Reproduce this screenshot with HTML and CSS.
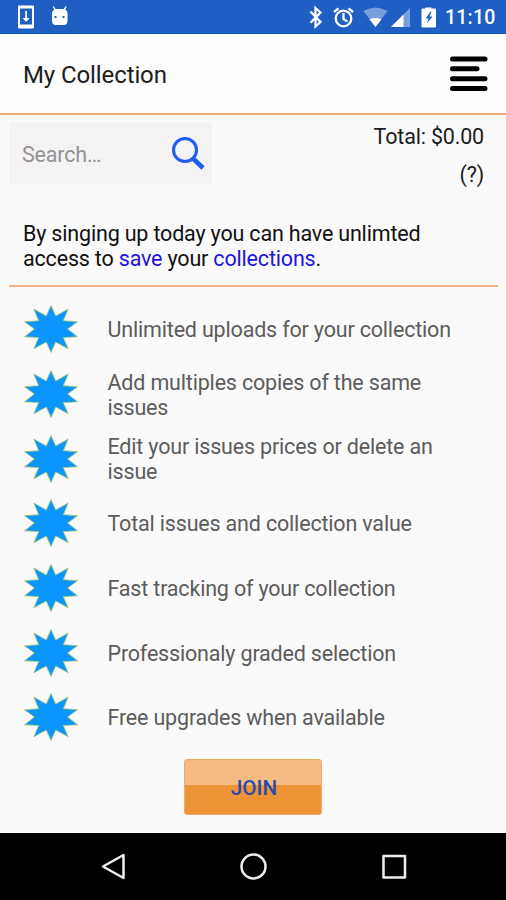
FILE: index.html
```
<!DOCTYPE html>
<html lang="en">
<head>
<meta charset="utf-8">
<title>My Collection</title>
<link rel="stylesheet" href="styles.css">
</head>
<body>
<svg width="0" height="0" class="defs"><defs>
<symbol id="star" viewBox="0 0 54 48"><path d="M27 .500L31.700 11L44.200 4L39.300 15.700L53.500 16.700L43.600 24L53.500 31.800L39.300 32.600L44.200 43.800L31.700 37L27 47.500L22.300 37L9.800 43.800L14.700 32.600L.5 31.800L10.400 24L.5 16.700L14.700 15.700L9.800 4L22.300 11Z"/></symbol>
</defs></svg>
<div class="status">
  <svg width="506" height="34" viewBox="0 0 506 34" fill="#fff">
    <path fill-rule="evenodd" d="M19 5.500h14q1 0 1 1v21q0 1-1 1H19q-1 0-1-1v-21q0-1 1-1zM20 8.500v16h12v-16z"/>
    <path d="M25.200 11h1.800v7h2.500L26.100 22l-3.500-4h2.600z"/>
    <path fill-rule="evenodd" d="M53.500 6l2.200 3h8l2.200-3 .8.500-1.500 3q2.300 1 2.300 3.500v8q0 4-4 4h-7.500q-4 0-4-4v-8q0-2.500 2.300-3.500l-1.600-3zM54.500 16v2h2v-2zM62.500 16v2h2v-2z"/>
    <path d="M310.500 11.500l10 10.500-5 4.500V8l5 4.500-10 10.200" fill="none" stroke="#fff" stroke-width="2.300"/>
    <g fill="none" stroke="#fff" stroke-width="2.300"><circle cx="343.500" cy="18.500" r="7.800"/><path d="M343.500 13v6l4 2.500M334 12l4.500-3.700M353 12l-4.500-3.700"/></g>
    <path d="M363.500 11q12-7 24 0L375.500 27z" fill-opacity=".4"/><path d="M369.500 19.300q6-2.800 12 0L375.500 27z"/>
    <path d="M410 8v19h-19z" fill-opacity=".4"/><path d="M403.500 14.500v12.500h-12.500z"/>
    <path fill-rule="evenodd" d="M425.500 8.500v-1h6v1h3.500q1 0 1 1v17q0 1-1 1h-12.500q-1 0-1-1v-17q0-1 1-1zM430.500 11.500l-5 7h3l-1.500 5 5.500-7h-3l2-5z"/>
  </svg>
  <span class="clock">11:10</span>
</div>
<header class="bar"><h1>My Collection</h1>
  <svg width="38" height="36" viewBox="0 0 38 36"><path d="M2.500 3h32.500M2.500 12.800h24.500M2.500 22.700h32.500M2.500 32.500h32.500" stroke="#000" stroke-width="5" stroke-linecap="round"/></svg>
</header>
<main>
  <section class="tools">
    <div class="search"><span>Search…</span>
      <svg width="34" height="34" viewBox="0 0 34 34" fill="none" stroke="#1d5cf5"><circle cx="14" cy="13" r="11.500" stroke-width="3"/><path d="M21.500 21l10.500 10" stroke-width="4.500"/></svg>
    </div>
    <div class="total"><span>Total: $0.00</span><span class="help">(?)</span></div>
  </section>
  <p class="intro">By singing up today you can have unlimted<br>access to <a>save</a> your <a>collections</a>.</p>
  <ul>
    <li><svg class="star"><use href="#star"/></svg><span>Unlimited uploads for your collection</span></li>
    <li><svg class="star"><use href="#star"/></svg><span>Add multiples copies of the same<br>issues</span></li>
    <li><svg class="star"><use href="#star"/></svg><span>Edit your issues prices or delete an<br>issue</span></li>
    <li><svg class="star"><use href="#star"/></svg><span>Total issues and collection value</span></li>
    <li><svg class="star"><use href="#star"/></svg><span>Fast tracking of your collection</span></li>
    <li><svg class="star"><use href="#star"/></svg><span>Professionaly graded selection</span></li>
    <li><svg class="star"><use href="#star"/></svg><span>Free upgrades when available</span></li>
  </ul>
  <button class="join">JOIN</button>
</main>
<nav>
  <svg width="506" height="66" viewBox="0 0 506 66" fill="none" stroke="#eee" stroke-width="2.500" stroke-linejoin="round"><path d="M103 33.500l20.500-11.500v23z"/><circle cx="253.500" cy="33.500" r="12"/><rect x="383.500" y="23" width="21.500" height="21.500"/></svg>
</nav>
</body>
</html>
```

FILE: styles.css
```
* { box-sizing: border-box; }
body { margin: 0; width: 506px; height: 900px; display: flex; flex-direction: column; overflow: hidden; background: #fafafa; color: #1c1c1c; font-family: Roboto, sans-serif; font-size: 21.500px; letter-spacing: -.18px; }
.defs { position: absolute; }
.status { position: relative; height: 34px; flex: none; background: #1f5fc3; border-bottom: 1px solid #1450b8; }
.status svg { display: block; }
.clock { position: absolute; right: 10.500px; top: 5px; color: #fff; font-size: 19.500px; line-height: 26px; font-weight: 500; letter-spacing: .2px; }
.bar { height: 81px; flex: none; display: flex; justify-content: space-between; align-items: center; padding: 0 18px 0 23px; background: #fdfdfd; border-bottom: 2px solid #f2ae72; }
h1 { margin: 3px 0 0; font-size: 24px; font-weight: 400; line-height: 28px; letter-spacing: -.1px; }
.bar svg { margin-top: 1px; }
main { height: 718px; flex: none; display: flex; flex-direction: column; }
.tools { display: flex; justify-content: space-between; height: 69px; padding: 7px 22px 0 9px; }
.search { width: 203px; height: 62px; display: flex; justify-content: space-between; align-items: center; padding: 2px 7px 0 13px; background: #f4f2f3; color: #929292; }
.total { display: flex; flex-direction: column; align-items: flex-end; line-height: 37.500px; margin-top: -4px; }
.intro { margin: 0 8px 0 9px; padding: 37px 14px 0; height: 103px; line-height: 25px; border-bottom: 2px solid #f0b381; white-space: nowrap; color: #111; }
.intro a { color: #1f14e0; }
ul { list-style: none; margin: 10px 0 0; padding: 0 24px; }
li { display: flex; align-items: center; gap: 29.500px; height: 64.700px; line-height: 25px; color: #5c5c5c; white-space: nowrap; }
li span { margin-top: 1px; }
.star { width: 54px; height: 48px; flex: none; fill: #0a95ff; stroke: #a5c96a; stroke-width: .8; stroke-miterlimit: 10; }
.join { align-self: center; width: 138px; height: 56px; margin-top: 9px; padding: 3px 0 0 2px; border: 1px solid #f3aa65; border-radius: 3px; background: linear-gradient(#f6bb82 0 46%, #ed9338 46%); color: #294caa; font: 500 20.700px Roboto, sans-serif; }
nav { height: 67px; flex: none; background: #000; }
nav svg { display: block; }
```
